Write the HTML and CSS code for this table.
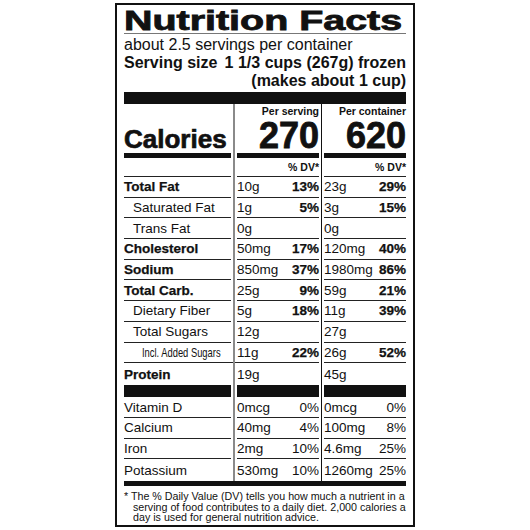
FILE: index.html
```html
<!DOCTYPE html>
<html lang="en">
<head>
    <meta charset="UTF-8">
    <meta name="viewport" content="width=device-width, initial-scale=1.0">
    <title>Nutrition Facts</title>
    <link rel="stylesheet" href="styles.css">
</head>
<body>
    <div class="label">
        <h1 class="title"><span>Nutrition Facts</span></h1>
        <div class="servings">about 2.5 servings per container</div>
        <div class="serving-size">
            <span>Serving size</span>
            <span>1 1/3 cups (267g) frozen</span>
        </div>
        <div class="serving-note">(makes about 1 cup)</div>
        <div class="bar-top"></div>

        <div class="row head">
            <div class="cell c1"><div class="in cal-label">Calories</div></div>
            <div class="cell c2"><div class="in cal-val"><span class="per">Per serving</span><span class="big">270</span></div></div>
            <div class="cell c3"><div class="in cal-val"><span class="per">Per container</span><span class="big">620</span></div></div>
        </div>
        <div class="row dv">
            <div class="cell c1"><div class="in"></div></div>
            <div class="cell c2"><div class="in">% DV*</div></div>
            <div class="cell c3"><div class="in">% DV*</div></div>
        </div>

        <div class="row">
            <div class="cell c1"><div class="in b">Total Fat</div></div>
            <div class="cell c2"><div class="in"><span>10g</span><span class="b">13%</span></div></div>
            <div class="cell c3"><div class="in"><span>23g</span><span class="b">29%</span></div></div>
        </div>
        <div class="row">
            <div class="cell c1"><div class="in ind">Saturated Fat</div></div>
            <div class="cell c2"><div class="in"><span>1g</span><span class="b">5%</span></div></div>
            <div class="cell c3"><div class="in"><span>3g</span><span class="b">15%</span></div></div>
        </div>
        <div class="row">
            <div class="cell c1"><div class="in ind">Trans Fat</div></div>
            <div class="cell c2"><div class="in"><span>0g</span></div></div>
            <div class="cell c3"><div class="in"><span>0g</span></div></div>
        </div>
        <div class="row">
            <div class="cell c1"><div class="in b">Cholesterol</div></div>
            <div class="cell c2"><div class="in"><span>50mg</span><span class="b">17%</span></div></div>
            <div class="cell c3"><div class="in"><span>120mg</span><span class="b">40%</span></div></div>
        </div>
        <div class="row">
            <div class="cell c1"><div class="in b">Sodium</div></div>
            <div class="cell c2"><div class="in"><span>850mg</span><span class="b">37%</span></div></div>
            <div class="cell c3"><div class="in"><span>1980mg</span><span class="b">86%</span></div></div>
        </div>
        <div class="row">
            <div class="cell c1"><div class="in b">Total Carb.</div></div>
            <div class="cell c2"><div class="in"><span>25g</span><span class="b">9%</span></div></div>
            <div class="cell c3"><div class="in"><span>59g</span><span class="b">21%</span></div></div>
        </div>
        <div class="row">
            <div class="cell c1"><div class="in ind">Dietary Fiber</div></div>
            <div class="cell c2"><div class="in"><span>5g</span><span class="b">18%</span></div></div>
            <div class="cell c3"><div class="in"><span>11g</span><span class="b">39%</span></div></div>
        </div>
        <div class="row">
            <div class="cell c1"><div class="in ind">Total Sugars</div></div>
            <div class="cell c2"><div class="in"><span>12g</span></div></div>
            <div class="cell c3"><div class="in"><span>27g</span></div></div>
        </div>
        <div class="row">
            <div class="cell c1"><div class="in ind2"><span class="narrow">Incl. Added Sugars</span></div></div>
            <div class="cell c2"><div class="in"><span>11g</span><span class="b">22%</span></div></div>
            <div class="cell c3"><div class="in"><span>26g</span><span class="b">52%</span></div></div>
        </div>
        <div class="row sep">
            <div class="cell c1"><div class="in b">Protein</div></div>
            <div class="cell c2"><div class="in"><span>19g</span></div></div>
            <div class="cell c3"><div class="in"><span>45g</span></div></div>
        </div>

        <div class="row">
            <div class="cell c1"><div class="in">Vitamin D</div></div>
            <div class="cell c2"><div class="in"><span>0mcg</span><span>0%</span></div></div>
            <div class="cell c3"><div class="in"><span>0mcg</span><span>0%</span></div></div>
        </div>
        <div class="row">
            <div class="cell c1"><div class="in">Calcium</div></div>
            <div class="cell c2"><div class="in"><span>40mg</span><span>4%</span></div></div>
            <div class="cell c3"><div class="in"><span>100mg</span><span>8%</span></div></div>
        </div>
        <div class="row">
            <div class="cell c1"><div class="in">Iron</div></div>
            <div class="cell c2"><div class="in"><span>2mg</span><span>10%</span></div></div>
            <div class="cell c3"><div class="in"><span>4.6mg</span><span>25%</span></div></div>
        </div>
        <div class="row last">
            <div class="cell c1"><div class="in">Potassium</div></div>
            <div class="cell c2"><div class="in"><span>530mg</span><span>10%</span></div></div>
            <div class="cell c3"><div class="in"><span>1260mg</span><span>25%</span></div></div>
        </div>
        <div class="bar-bottom"></div>

        <p class="note">* The % Daily Value (DV) tells you how much a nutrient in a<br>serving of food contributes to a daily diet. 2,000 calories a<br>day is used for general nutrition advice.</p>
    </div>
</body>
</html>
```

FILE: styles.css
```css
body {
    margin: 0;
    background-color: #fff;
    color: #111;
    font-family: 'Liberation Sans', Arial, Helvetica, sans-serif;
}

.label {
    width: 300px;
    margin: 3px auto 0;
    padding: 4px 7px 1px;
    border: 2px solid #111;
    box-sizing: border-box;
}

.title {
    margin: 0;
    font-size: 27px;
    line-height: 24px;
    font-weight: bold;
    white-space: nowrap;
    border-bottom: 1px solid #777;
}

.title span {
    display: inline-block;
    transform: scaleX(1.46);
    transform-origin: 0 0;
    -webkit-text-stroke: 0.8px #111;
}

.servings {
    margin-top: 2px;
    font-size: 16px;
    line-height: 18px;
}

.serving-size {
    display: flex;
    justify-content: space-between;
    font-size: 16px;
    line-height: 18px;
    font-weight: bold;
}

.serving-note {
    text-align: right;
    font-size: 16px;
    line-height: 18px;
    font-weight: bold;
}

.bar-top {
    height: 12px;
    margin-top: 2px;
    background-color: #111;
}

.bar-bottom {
    height: 5px;
    background-color: #111;
}

/* rows of the table */
.row {
    display: grid;
    grid-template-columns: 109px 88px 85px;
    height: 20.7px;
    font-size: 13.5px;
}

.cell {
    display: flex;
}

.c1 {
    padding-right: 2px;
}

.c2 {
    border-left: 2px solid #8a8a8a;
    padding: 0 2px;
}

.c3 {
    border-left: 1px solid #111;
    padding-left: 2px;
}

.in {
    flex: 1;
    display: flex;
    align-items: center;
    justify-content: space-between;
    border-bottom: 1px solid #222;
    white-space: nowrap;
}

.b {
    font-weight: bold;
    -webkit-text-stroke: 0.25px #111;
}

.ind {
    padding-left: 9px;
}

.ind2 {
    padding-left: 18px;
}

/* no narrow face installed, so squeeze the regular one */
.narrow {
    display: inline-block;
    font-size: 13px;
    transform: scaleX(0.72);
    transform-origin: 0 50%;
}

.row.head {
    height: 54px;
}

.row.head .in {
    border-bottom: 5px solid #111;
}

.cal-label {
    align-items: flex-end;
    padding-bottom: 1px;
    font-size: 26px;
    line-height: 26px;
    font-weight: bold;
    -webkit-text-stroke: 0.7px #111;
}

.cal-val {
    flex-direction: column;
    align-items: flex-end;
    justify-content: space-between;
    padding: 1px 0 1px;
}

.per {
    font-size: 10.5px;
    line-height: 12px;
    font-weight: bold;
}

.big {
    font-size: 36px;
    line-height: 33px;
    font-weight: bold;
    -webkit-text-stroke: 0.8px #111;
}

.row.dv {
    height: 19px;
    font-size: 10.5px;
    font-weight: bold;
}

.row.dv .in {
    justify-content: flex-end;
}

.row.sep {
    height: 34px;
}

.row.sep .in {
    border-bottom: 12px solid #111;
}

.row.last {
    height: 22px;
}

.row.last .in {
    border-bottom: none;
}

.note {
    margin: 0;
    padding: 5px 0 1px 9px;
    text-indent: -9px;
    font-size: 10.7px;
    line-height: 10.5px;
    white-space: nowrap;
}
```
